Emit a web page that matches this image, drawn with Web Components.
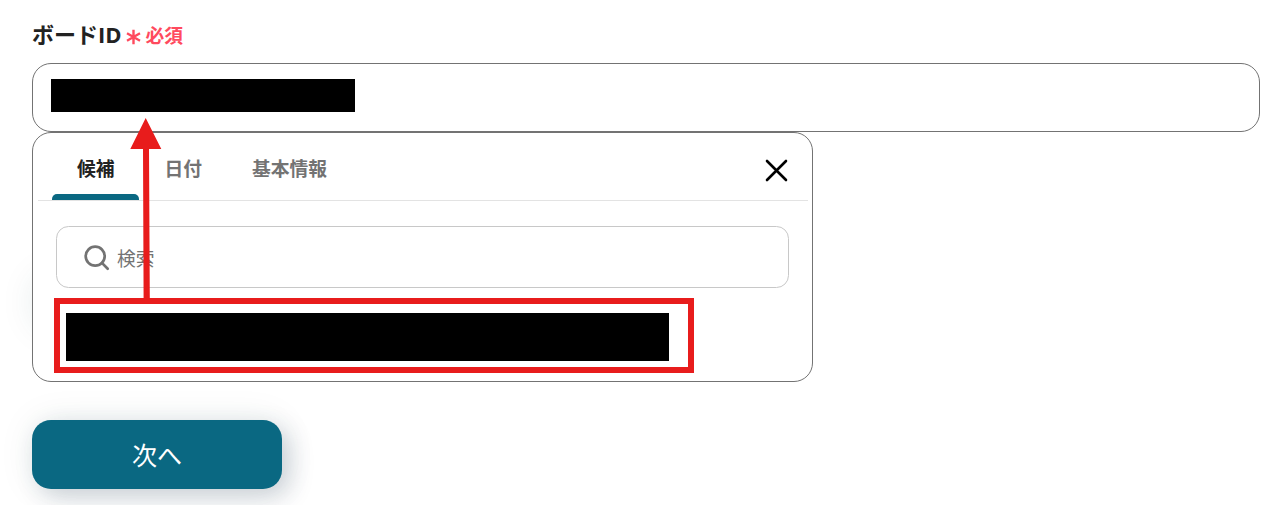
<!DOCTYPE html>
<html lang="ja">
<head>
<meta charset="utf-8">
<title>ボードID</title>
<style>
    body {
        margin: 0;
        height: 505px;
        overflow: hidden;
        background: #fff;
        color: #222;
        font-family: "Open Sans", "Noto Sans CJK JP", sans-serif;
    }
</style>
</head>
<body>
<board-form></board-form>

<script>
class FieldLabel extends HTMLElement {
    constructor() {
        super();
        this.attachShadow({mode: "open"}).innerHTML = `
        <style>
        :host {
            display: flex;
            align-items: center;
            height: 42px;
            font-size: 22px;
            font-weight: 700;
            line-height: 28px;
        }
        .title {
            padding-bottom: 2px;
        }
        .required {
            display: flex;
            align-items: center;
            width: 58px;
            margin-left: 4px;
            padding-top: 2px;
            color: #ff4a5e;
            font-size: 18.75px;
        }
        svg {
            margin: 2px 5px 0 0;
        }
        </style>
        <span class="title"><slot></slot></span>
        <span class="required">
            <svg width="15" height="16" viewBox="0 0 15 16" fill="none" stroke="currentColor" stroke-width="2.4">
                <path d="M7.5 .8v14.4M1 4.3l13 7.4M14 4.3L1 11.7"/>
            </svg>
            <slot name="required"></slot>
        </span>`;
    }
}

class TextField extends HTMLElement {
    constructor() {
        super();
        this.attachShadow({mode: "open"}).innerHTML = `
        <style>
        :host {
            display: block;
            box-sizing: border-box;
            height: 69px;
            padding: 15px 18px;
            border: 1px solid #737373;
            border-radius: 19px;
            background: #fff;
        }
        .value {
            width: 304px;
            height: 33px;
            background: #000;
        }
        </style>
        <div class="value"></div>`;
    }
}

class TabItem extends HTMLElement {
    constructor() {
        super();
        this.attachShadow({mode: "open"}).innerHTML = `
        <style>
        :host {
            display: flex;
            flex-direction: column;
            justify-content: space-between;
            color: #737373;
            font-size: 18.75px;
            font-weight: 700;
        }
        :host([active]) {
            color: #222;
        }
        .text {
            padding: 22px 25px 0;
            line-height: 28px;
        }
        .bar {
            height: 6px;
            margin-right: .5px;
            border-radius: 5px 5px 0 0;
        }
        :host([active]) .bar {
            background: #0a6882;
        }
        </style>
        <div class="text"><slot></slot></div>
        <div class="bar"></div>`;
    }
}

class TabBar extends HTMLElement {
    constructor() {
        super();
        this.attachShadow({mode: "open"}).innerHTML = `
        <style>
        :host {
            display: flex;
            box-sizing: border-box;
            height: 68px;
            margin: 0 4px 0 5px;
            padding: 0 20px 0 14px;
            border-bottom: 1px solid #e3e3e3;
        }
        .close {
            margin: 26px 0 0 auto;
        }
        </style>
        <slot></slot>
        <svg class="close" width="23" height="23" viewBox="0 0 23 23" fill="none" stroke="#000" stroke-width="2.6" stroke-linecap="round">
            <path d="M2 2l19 19M21 2L2 21"/>
        </svg>`;
    }
}

class SearchBox extends HTMLElement {
    constructor() {
        super();
        this.attachShadow({mode: "open"}).innerHTML = `
        <style>
        :host {
            display: flex;
            align-items: center;
            box-sizing: border-box;
            height: 62px;
            margin: 25px 23px 0;
            padding-left: 27px;
            border: 1px solid #c8c8c8;
            border-radius: 12.5px;
            color: #737373;
            font-size: 18.75px;
            line-height: 28px;
        }
        svg {
            margin: 1px 7px 0 0;
        }
        .text {
            padding-top: 3px;
        }
        </style>
        <svg width="26" height="26" viewBox="0 0 26 26" fill="none" stroke="currentColor" stroke-width="2.7">
            <circle cx="11.2" cy="11.2" r="9.5"/>
            <path d="M17.9 17.9l5.8 5.8" stroke-linecap="round"/>
        </svg>
        <span class="text"><slot></slot></span>`;
    }
}

class SuggestPanel extends HTMLElement {
    constructor() {
        super();
        this.attachShadow({mode: "open"}).innerHTML = `
        <style>
        :host {
            display: block;
            position: relative;
            box-sizing: border-box;
            width: 781px;
            height: 250px;
            border: 1px solid #737373;
            border-radius: 19px;
            background: #fff;
        }
        .candidate {
            box-sizing: border-box;
            width: 640px;
            height: 75px;
            margin: 10px 0 0 21px;
            padding: 9px 0 0 6px;
            border: 6px solid #e81c1c;
        }
        .value {
            width: 603px;
            height: 47.5px;
            background: #000;
        }
        /* arrow from the candidate up to the input */
        .arrow {
            position: absolute;
            left: 97px;
            top: -15px;
        }
        </style>
        <slot></slot>
        <div class="candidate"><div class="value"></div></div>
        <svg class="arrow" width="32" height="181" viewBox="0 0 32 181" fill="#e81c1c">
            <path d="M15.7 0L31.3 31H19l.8 150h-6.2L13 31H.3z"/>
        </svg>`;
    }
}

class NextButton extends HTMLElement {
    constructor() {
        super();
        this.attachShadow({mode: "open"}).innerHTML = `
        <style>
        :host {
            display: flex;
            align-items: center;
            justify-content: center;
            width: 250px;
            height: 69px;
            margin-top: 38px;
            border-radius: 19px;
            background: #0a6882;
            box-shadow: 8px 8px 25px rgba(30, 50, 80, .2), 0 0 36px rgba(20, 80, 70, .08);
            color: #fff;
            font-size: 25px;
            line-height: 36px;
        }
        </style>
        <slot></slot>`;
    }
}

class BoardForm extends HTMLElement {
    constructor() {
        super();
        this.attachShadow({mode: "open"}).innerHTML = `
        <style>
        :host {
            display: block;
            padding: 14px 26px 0 32px;
        }
        field-label {
            margin-bottom: 7px;
        }
        .popup {
            position: relative;
        }
        /* soft glow showing beside the panel */
        .popup::before {
            content: "";
            position: absolute;
            left: 4px;
            top: 145px;
            width: 200px;
            height: 50px;
            border-radius: 19px;
            box-shadow: 0 0 36px rgba(20, 70, 70, .13);
        }
        </style>
        <field-label>ボードID<span slot="required">必須</span></field-label>
        <text-field></text-field>
        <div class="popup">
            <suggest-panel>
                <tab-bar>
                    <tab-item active>候補</tab-item>
                    <tab-item>日付</tab-item>
                    <tab-item>基本情報</tab-item>
                </tab-bar>
                <search-box>検索</search-box>
            </suggest-panel>
        </div>
        <next-button>次へ</next-button>`;
    }
}

customElements.define("field-label", FieldLabel);
customElements.define("text-field", TextField);
customElements.define("tab-item", TabItem);
customElements.define("tab-bar", TabBar);
customElements.define("search-box", SearchBox);
customElements.define("suggest-panel", SuggestPanel);
customElements.define("next-button", NextButton);
customElements.define("board-form", BoardForm);
</script>
</body>
</html>
